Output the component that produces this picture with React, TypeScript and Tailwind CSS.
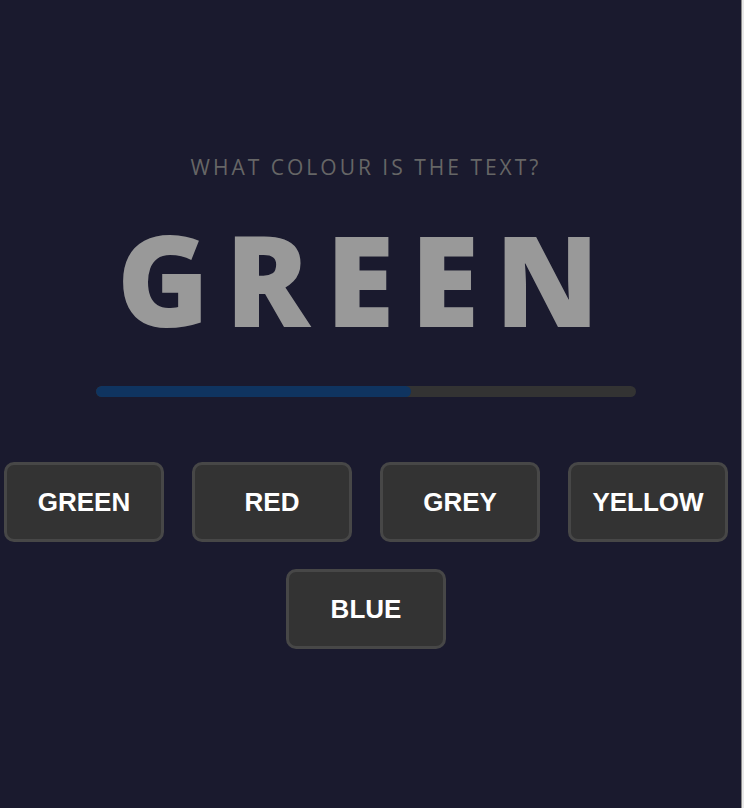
import { useState } from 'react';

const choices = ['GREEN', 'RED', 'GREY', 'YELLOW', 'BLUE'];

export default function App() {
  const [progress] = useState(58.3);

  return (
    <div className="flex min-h-[808px] w-full bg-[#1a1a2e]">
      <main className="w-[741px] shrink-0">
        <div className="flex w-[732px] flex-col items-center pt-[152px]">
          <p
            className="text-[21px] leading-[30px] tracking-[3px] text-[#666666]"
            style={{ fontFamily: '"Open Sans", sans-serif' }}
          >
            WHAT COLOUR IS THE TEXT?
          </p>

          <h1
            className="mt-[32px] text-[125px] font-extrabold leading-[130px] tracking-[16px] text-[#999999]"
            style={{ fontFamily: '"Open Sans", sans-serif' }}
          >
            GREEN
          </h1>

          {/* timer bar */}
          <div className="mt-[42px] h-[11px] w-[540px] overflow-hidden rounded-full bg-[#333333]">
            <div className="h-full rounded-full bg-[#0f3460]" style={{ width: `${progress}%` }} />
          </div>

          <div className="mt-[65px] flex w-[732px] flex-wrap justify-center gap-x-[28px] gap-y-[27px]">
            {choices.map((c) => (
              <button
                key={c}
                className="flex h-[80px] w-[160px] items-center justify-center rounded-[10px] border-[3px] border-[#474747] bg-[#333333] text-[26px] font-bold text-white"
                style={{ fontFamily: '"Liberation Sans", Arial, sans-serif' }}
              >
                {c}
              </button>
            ))}
          </div>
        </div>
      </main>
      <div className="flex-1 border-l border-[#8a8a8a] bg-[#e8e8e8]" />
    </div>
  );
}
